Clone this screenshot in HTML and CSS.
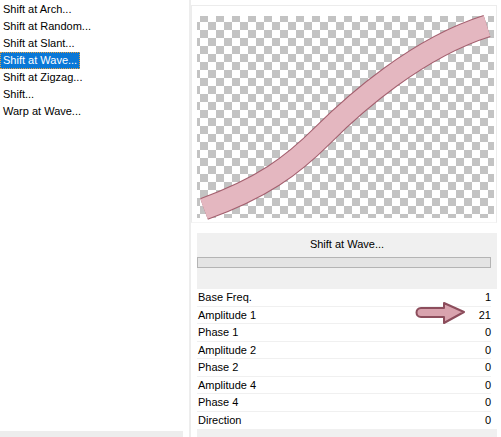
FILE: index.html
```html
<!DOCTYPE html>
<html lang="en">
<head>
    <meta charset="UTF-8">
    <title>Shift at Wave</title>
    <link rel="stylesheet" href="styles.css">
</head>
<body>

<div class="app">
    <div class="side">
        <ul class="effects">
            <li>Shift at Arch...</li>
            <li>Shift at Random...</li>
            <li>Shift at Slant...</li>
            <li class="selected">Shift at Wave...</li>
            <li>Shift at Zigzag...</li>
            <li>Shift...</li>
            <li>Warp at Wave...</li>
        </ul>
        <div class="side-foot"></div>
    </div>

    <div class="main">
        <div class="preview">
            <svg width="304" height="215" viewBox="0 0 304 215">
                <defs>
                    <pattern id="checks" width="16" height="16" patternUnits="userSpaceOnUse">
                        <rect width="16" height="16" fill="#ffffff"/>
                        <rect width="8" height="8" fill="#c3c3c3"/>
                        <rect x="8" y="8" width="8" height="8" fill="#c3c3c3"/>
                    </pattern>
                </defs>
                <rect x="5" y="10" width="297" height="202" fill="url(#checks)"/>
                <!-- wave band, coords relative to the box -->
                <path d="M12,203 C70,182 100,160 131,129 S225,42 295,20" fill="none" stroke="#a4606f" stroke-width="23"/>
                <path d="M12,203 C70,182 100,160 131,129 S225,42 295,20" fill="none" stroke="#e4b7c0" stroke-width="21"/>
            </svg>
        </div>

        <div class="panel">
            <div class="panel-title">Shift at Wave...</div>
            <div class="progress"></div>
        </div>

        <div class="params">
            <div class="row"><span>Base Freq.</span><span>1</span></div>
            <div class="row">
                <span>Amplitude 1</span>
                <span class="val-with-arrow">
                    <svg class="arrow" width="52" height="23" viewBox="0 0 52 23">
                        <path d="M7,6 L30,6 L30,1 L50,10 L30,21 L30,15 L7,15 C1,15 1,6 7,6 Z" fill="#d9a3ae" stroke="#8c4d5c" stroke-width="2" stroke-linejoin="round"/>
                    </svg>
                    21
                </span>
            </div>
            <div class="row"><span>Phase 1</span><span>0</span></div>
            <div class="row"><span>Amplitude 2</span><span>0</span></div>
            <div class="row"><span>Phase 2</span><span>0</span></div>
            <div class="row"><span>Amplitude 4</span><span>0</span></div>
            <div class="row"><span>Phase 4</span><span>0</span></div>
            <div class="row"><span>Direction</span><span>0</span></div>
        </div>
        <div class="main-foot"></div>
    </div>
</div>

</body>
</html>
```

FILE: styles.css
```css
body, html {
    margin: 0;
    height: 100%;
    overflow: hidden;
    font-family: "Liberation Sans", Arial, sans-serif;
    font-size: 11px;
    color: #000;
    background-color: #ffffff;
}

.app {
    display: flex;
    height: 437px;
}

.side {
    width: 189px;
    display: flex;
    flex-direction: column;
    border-right: 2px solid #ededed;
}

.effects {
    list-style: none;
    margin: 0;
    padding: 1px 0 0 0;
    flex: 1;
}

.effects li {
    height: 17px;
    line-height: 17px;
    padding-left: 3px;
}

.effects li.selected {
    display: inline-block;
    background-color: #0a78d7;
    color: white;
    outline: 1px dotted #e8a040;
    outline-offset: -1px;
    padding-right: 3px;
}

.side-foot {
    height: 6px;
    width: 183px;
    background-color: #ededed;
}

.main {
    flex: 1;
    display: flex;
    flex-direction: column;
    padding: 0 4px 0 0;
}

.preview {
    margin-top: 5px;
    height: 216px;
    border: 1px solid #ececec;
    border-bottom-color: #f4f4f4;
}

.preview svg {
    display: block;
}

.panel {
    margin: 10px 0 0 6px;
    height: 56px;
    background-color: #f0f0f0;
    padding-top: 5px;
    box-sizing: border-box;
}

.panel-title {
    text-align: center;
    height: 19px;
}

.progress {
    height: 9px;
    width: 292px;
    border: 1px solid #b4b4b4;
    background-color: #e4e4e4;
}

.params {
    margin-left: 6px;
    width: 294px;
    border-right: 4px solid #ffffff;
}

.row {
    display: flex;
    justify-content: space-between;
    height: 17.5px;
    line-height: 16px;
    padding: 0 0 0 1px;
    border-bottom: 1.5px solid #f0f0f0;
    box-sizing: border-box;
}

.row:last-child {
    border-bottom: none;
}

.val-with-arrow {
    position: relative;
}

.arrow {
    position: absolute;
    right: 25px;
    top: -5px;
}

.main-foot {
    flex: 1;
    margin-left: 6px;
    background-color: #f0f0f0;
}
```
